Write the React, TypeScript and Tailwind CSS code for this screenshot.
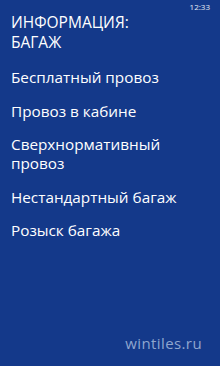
import React from "react";

export default function App() {
  const items = [
    "Бесплатный провоз",
    "Провоз в кабине",
    "Сверхнормативный провоз",
    "Нестандартный багаж",
    "Розыск багажа",
  ];
  return (
    <div
      className="w-[220px] h-[366px] bg-[#14398a] text-white relative overflow-hidden"
      style={{ fontFamily: '"Open Sans", "Noto Sans", sans-serif' }}
    >
      <div className="absolute top-[2px] right-[10px] text-[8px] leading-[10px] text-white/90">12:33</div>
      <div className="pl-[11px] pt-[13px] text-[15.5px] leading-[19.5px] font-normal pr-2">
        ИНФОРМАЦИЯ:
        <br />
        БАГАЖ
      </div>
      <div className="flex flex-col pl-[11px] pt-[16px] gap-[14.5px] pr-4">
        {items.map((t) => (
          <div key={t} className="text-[15.3px] leading-[19px] w-[170px]">
            {t}
          </div>
        ))}
      </div>
      <div className="absolute right-[18px] top-[334px] text-[15px] leading-[18px] tracking-[0.4px] text-[#8fa6cf]">wintiles.ru</div>
    </div>
  );
}
